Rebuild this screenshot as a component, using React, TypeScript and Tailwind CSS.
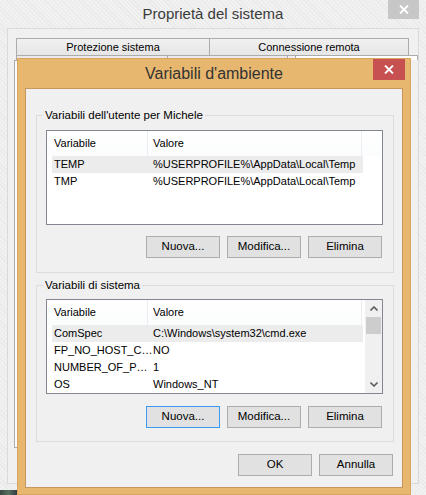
import React from 'react';

const font = "font-['Liberation_Sans',Arial,sans-serif]";

type Row = { name: string; value: string; selected?: boolean };

const userRows: Row[] = [
  { name: 'TEMP', value: '%USERPROFILE%\\AppData\\Local\\Temp', selected: true },
  { name: 'TMP', value: '%USERPROFILE%\\AppData\\Local\\Temp' },
];

const systemRows: Row[] = [
  { name: 'ComSpec', value: 'C:\\Windows\\system32\\cmd.exe', selected: true },
  { name: 'FP_NO_HOST_C…', value: 'NO' },
  { name: 'NUMBER_OF_P…', value: '1' },
  { name: 'OS', value: 'Windows_NT' },
];

const Btn: React.FC<{ label: string; focused?: boolean }> = ({ label, focused }) => (
  <button
    className={`w-[74px] h-[22px] bg-[#e1e1e1] border text-[11.5px] leading-none text-black flex items-center justify-center ${
      focused ? 'border-[#3c9af0]' : 'border-[#adadad]'
    }`}
  >
    {label}
  </button>
);

const ListView: React.FC<{ rows: Row[]; scroll?: boolean }> = ({ rows, scroll }) => (
  <div className="w-[337px] h-[95px] border border-[#828790] bg-white flex overflow-hidden">
    <div className="flex-1 flex flex-col min-w-0">
      {/* header */}
      <div className="h-[25px] shrink-0 flex items-center text-[11px] text-black bg-[linear-gradient(#ffffff,#fbfcfd)]">
        <div className="w-[101px] shrink-0 h-full pl-[7px] flex items-center border-r border-[#eaeef3]">Variabile</div>
        <div className="w-[214px] shrink-0 h-full pl-[5px] flex items-center border-r border-[#eaeef3]">Valore</div>
        <div className="flex-1" />
      </div>
      {rows.map((r) => (
        <div key={r.name} className="h-[17px] shrink-0 flex items-center text-[11px] text-black">
          <div className={`w-[311px] ml-[5px] h-full flex items-center ${r.selected ? 'bg-[#ececec]' : ''}`}>
            <div className="w-[96px] shrink-0 pl-[2px] whitespace-nowrap">{r.name}</div>
            <div className="pl-[5px] whitespace-nowrap">{r.value}</div>
          </div>
        </div>
      ))}
    </div>
    {scroll && (
      <div className="w-[17px] shrink-0 bg-[#f0f0f0] flex flex-col">
        <div className="h-[17px] flex items-center justify-center">
          <svg width="8" height="5" viewBox="0 0 8 5"><path d="M0.5 4.5 L4 1 L7.5 4.5" fill="none" stroke="#606060" strokeWidth="1.6" /></svg>
        </div>
        <div className="h-[17px] mx-[1px] bg-[#cdcdcd]" />
        <div className="flex-1" />
        <div className="h-[17px] flex items-center justify-center">
          <svg width="8" height="5" viewBox="0 0 8 5"><path d="M0.5 0.5 L4 4 L7.5 0.5" fill="none" stroke="#606060" strokeWidth="1.6" /></svg>
        </div>
      </div>
    )}
  </div>
);

const Group: React.FC<{ title: string; className?: string; children: React.ReactNode }> = ({ title, className, children }) => (
  <div className={`relative w-[358px] border border-[#dcdcdc] ${className ?? ''}`}>
    <span className="absolute -top-[9px] left-[6px] px-[2px] bg-[#f0f0f0] text-[11.5px] leading-[16px] text-black">{title}</span>
    {children}
  </div>
);

const CloseX: React.FC = () => (
  <svg width="10" height="9" viewBox="0 0 10 9">
    <path d="M1 0.5 L9 8.5 M9 0.5 L1 8.5" stroke="white" strokeWidth="1.8" />
  </svg>
);

export default function App() {
  return (
    <div
      className={`${font} relative w-[426px] h-[495px] overflow-hidden bg-[repeating-linear-gradient(45deg,#e9e9e9_0px,#e9e9e9_1px,#f1f1f1_1px,#f1f1f1_3px)]`}
    >
      {/* outer window: Proprietà del sistema */}
      <div className="h-[28px] flex items-center justify-center text-[15px] text-[#3b3b3b]">Proprietà del sistema</div>
      <div className="absolute top-0 left-[388px] w-[31px] h-[19px] bg-[#c7c7c7] flex items-center justify-center">
        <CloseX />
      </div>
      <div className="ml-[7px] w-[412px] h-[456px] border border-[#dadada] bg-[#f0f0f0] pt-[9px] pl-[8px]">
        <div className="flex text-[11px] text-black">
          <div className="w-[194px] h-[18px] border border-[#acacac] bg-[linear-gradient(#f0f0f0,#e6e6e6)] flex items-center justify-center">
            Protezione sistema
          </div>
          <div className="w-[199px] h-[18px] border border-l-0 border-[#acacac] bg-[linear-gradient(#f0f0f0,#e6e6e6)] flex items-center justify-center">
            Connessione remota
          </div>
        </div>
        <div className="flex">
          <div className="w-[152px] h-[4px] border-x border-[#acacac] bg-[#e9e9e9]" />
          <div className="w-[120px] h-[4px] border-r border-[#acacac] bg-[#e9e9e9]" />
          <div className="ml-[7px] -mt-[1px] w-[123px] h-[5px] border border-b-0 border-[#acacac] bg-white" />
        </div>
        <div className="-ml-[2px] w-[396px] h-[388px] border border-[#acacac] bg-[#fafafa]" />
      </div>

      {/* inner dialog: Variabili d'ambiente (window on desktop) */}
      <div className="absolute left-[17px] top-[58px] w-[394px] h-[437px] bg-[#e8b76f] border border-[#d8a660] flex flex-col">
        <div className="h-[29px] shrink-0 flex items-center justify-center text-[16px] text-[#333333]">Variabili d'ambiente</div>
        <div className="absolute top-0 left-[355px] w-[32px] h-[21px] bg-[#c75050] flex items-center justify-center">
          <CloseX />
        </div>
        <div className="mx-[7px] w-[378px] h-[400px] border border-[#c8955a] bg-[#f0f0f0] flex flex-col pl-[10px]">
          <Group title="Variabili dell'utente per Michele" className="mt-[26px] h-[158px] pl-[9px] pt-[14px]">
            <ListView rows={userRows} />
            <div className="mt-[11px] w-[336px] flex justify-end gap-[7px]">
              <Btn label="Nuova..." />
              <Btn label="Modifica..." />
              <Btn label="Elimina" />
            </div>
          </Group>
          <Group title="Variabili di sistema" className="mt-[12px] h-[157px] pl-[9px] pt-[13px]">
            <ListView rows={systemRows} scroll />
            <div className="mt-[12px] w-[336px] flex justify-end gap-[7px]">
              <Btn label="Nuova..." focused />
              <Btn label="Modifica..." />
              <Btn label="Elimina" />
            </div>
          </Group>
          <div className="mt-[12px] w-[357px] flex justify-end gap-[7px]">
            <Btn label="OK" />
            <Btn label="Annulla" />
          </div>
        </div>
      </div>

      {/* wallpaper peeking at bottom-left */}
      <div className="absolute left-0 top-[490px] w-[17px] h-[5px] bg-[linear-gradient(90deg,#3c4a44,#58705f,#2f3c40)]" />
    </div>
  );
}
